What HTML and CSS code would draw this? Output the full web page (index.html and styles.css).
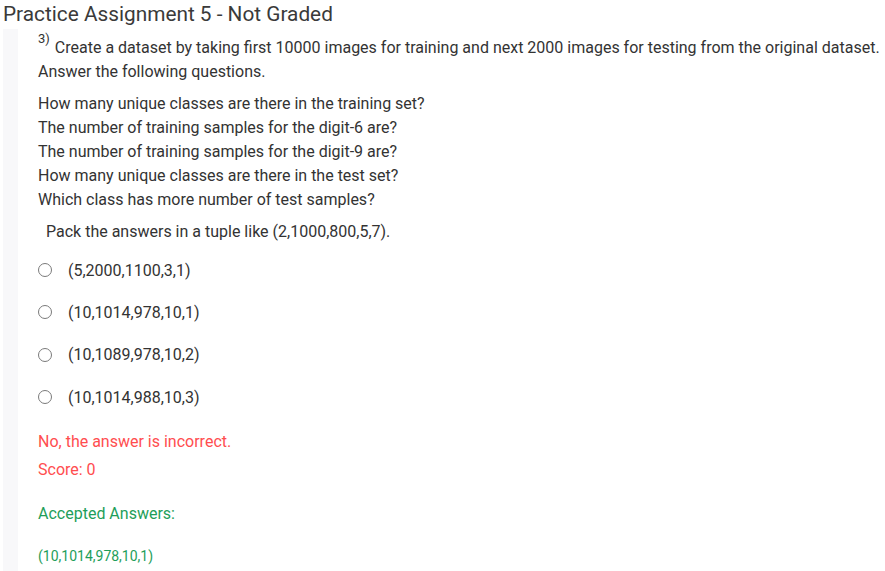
FILE: index.html
```html
<!DOCTYPE html>
<html>
<head>
<meta charset="utf-8">
<link rel="stylesheet" href="styles.css">
</head>
<body>
<div class="page">
  <div class="title">Practice Assignment 5 - Not Graded</div>
  <div class="question">
    <div class="strip"></div>
    <div class="content">
      <div class="qtext"><sup class="qnum">3)</sup> Create a dataset by taking first 10000 images for training and next 2000 images for testing from the original dataset.</div>
      <div class="line">Answer the following questions.</div>
      <div class="list">
        <div class="qline">How many unique classes are there in the training set?</div>
        <div class="qline">The number of training samples for the digit-6 are?</div>
        <div class="qline">The number of training samples for the digit-9 are?</div>
        <div class="qline">How many unique classes are there in the test set?</div>
        <div class="qline">Which class has more number of test samples?</div>
      </div>
      <div class="pack">Pack the answers in a tuple like (2,1000,800,5,7).</div>
      <div class="options">
        <div class="option"><span class="radio"></span><span>(5,2000,1100,3,1)</span></div>
        <div class="option"><span class="radio"></span><span>(10,1014,978,10,1)</span></div>
        <div class="option"><span class="radio"></span><span>(10,1089,978,10,2)</span></div>
        <div class="option"><span class="radio"></span><span>(10,1014,988,10,3)</span></div>
      </div>
      <div class="wrong">No, the answer is incorrect.</div>
      <div class="score">Score: 0</div>
      <div class="accepted">Accepted Answers:</div>
      <div class="answer">(10,1014,978,10,1)</div>
    </div>
  </div>
</div>
</body>
</html>
```
FILE: styles.css
```css
html, body {
  margin: 0;
  padding: 0;
  background: #ffffff;
}
body {
  font-family: Roboto, "Liberation Sans", sans-serif;
  color: #333333;
}
.page {
  padding-left: 3px;
}
.title {
  font-size: 20.8px;
  line-height: 28px;
  color: #3a3a3a;
  height: 29px;
}
.question {
  display: flex;
}
.strip {
  width: 15px;
  background: #f8f8fa;
  flex: none;
}
.content {
  padding-left: 20px;
  font-size: 16px;
  padding-bottom: 12px;
}
.qtext {
  line-height: 24px;
  padding-top: 7px;
}
.qnum {
  font-size: 13px;
  vertical-align: 10px;
  line-height: 0;
  margin-right: 1px;
}
.line {
  line-height: 24px;
}
.list {
  margin-top: 8px;
}
.qline {
  line-height: 24px;
}
.pack {
  line-height: 24px;
  margin-top: 8px;
  padding-left: 8px;
}
.options {
  margin-top: 5px;
}
.option {
  display: flex;
  align-items: center;
  height: 42.3px;
}
.radio {
  width: 12px;
  height: 12px;
  border: 1.5px solid #7a7a7a;
  border-radius: 50%;
  margin-left: 0;
  margin-right: 16px;
  flex: none;
}
.wrong {
  color: #ff4d4f;
  line-height: 24px;
  margin-top: 12px;
}
.score {
  color: #ff4d4f;
  line-height: 24px;
  margin-top: 4px;
}
.accepted {
  color: #1e9e5a;
  line-height: 24px;
  margin-top: 20px;
}
.answer {
  color: #1e9e5a;
  font-size: 14px;
  line-height: 20px;
  margin-top: 20px;
}
```
